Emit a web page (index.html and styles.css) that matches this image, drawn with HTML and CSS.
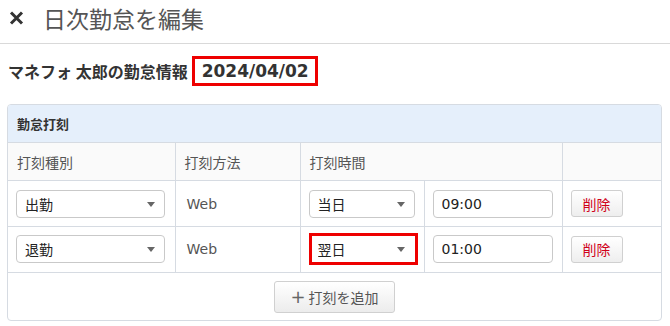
FILE: index.html
```html
<!DOCTYPE html>
<html lang="ja">
<head>
<meta charset="utf-8">
<link rel="stylesheet" href="styles.css">
</head>
<body>
<header class="modal-head">
  <svg class="close" width="15" height="14" viewBox="0 0 15 14"><path d="M2 1.5 L13 12.5 M13 1.5 L2 12.5" stroke="#333" stroke-width="3" stroke-linecap="butt"/></svg>
  <h1 class="title">日次勤怠を編集</h1>
</header>
<div class="info">
  <span class="name">マネフォ 太郎の勤怠情報</span>
  <span class="date">2024/04/02</span>
</div>
<section class="panel">
  <div class="panel-head">勤怠打刻</div>
  <table class="grid">
    <colgroup>
      <col class="c1"><col class="c2"><col class="c3"><col class="c4"><col class="c5">
    </colgroup>
    <thead>
      <tr><th>打刻種別</th><th>打刻方法</th><th colspan="2">打刻時間</th><th></th></tr>
    </thead>
    <tbody>
      <tr class="r1">
        <td><span class="sel w1"><select><option>出勤</option></select></span></td>
        <td class="web">Web</td>
        <td><span class="sel w2"><select><option>当日</option></select></span></td>
        <td><input class="time" type="text" value="09:00"></td>
        <td><button class="del">削除</button></td>
      </tr>
      <tr class="r2">
        <td><span class="sel w1"><select><option>退勤</option></select></span></td>
        <td class="web">Web</td>
        <td><span class="sel w2 mark"><select><option>翌日</option></select></span></td>
        <td><input class="time" type="text" value="01:00"></td>
        <td><button class="del">削除</button></td>
      </tr>
    </tbody>
  </table>
  <div class="panel-foot">
    <button class="add"><span class="plus">+</span>打刻を追加</button>
  </div>
</section>
</body>
</html>
```

FILE: styles.css
```css
* { box-sizing: border-box; }
html, body { margin: 0; padding: 0; background: #fff; }
body {
  font-family: "DejaVu Sans", "Noto Sans CJK JP", sans-serif;
  color: #333;
  width: 670px;
  height: 326px;
  overflow: hidden;
}
.modal-head {
  height: 44px;
  border-bottom: 1px solid #d9d9d9;
  display: flex;
  align-items: center;
  padding: 0 0 8px 9px;
}
.close { display: block; margin-right: 19px; }
.title {
  margin: 0;
  font-family: "Noto Sans CJK JP", sans-serif;
  font-weight: 400;
  font-size: 23px;
  line-height: 28px;
  color: #555;
}
.info {
  display: flex;
  align-items: center;
  padding: 12px 8px 18px 8px;
  height: 60px;
}
.name {
  font-family: "Noto Sans CJK JP", sans-serif;
  font-weight: 700;
  font-size: 16px;
  color: #333;
  margin-right: 4px;
}
.date {
  display: inline-flex;
  align-items: center;
  height: 30px;
  border: 3px solid #ee0000;
  padding: 0 6px 0 7px;
  font-weight: 700;
  font-size: 17px;
  color: #333;
}
.panel {
  margin-left: 7px;
  width: 655px;
  border: 1px solid #d6dbe2;
  border-radius: 4px;
  overflow: hidden;
}
.panel-head {
  height: 37px;
  background: #e5effb;
  display: flex;
  align-items: center;
  padding-left: 9px;
  font-family: "Noto Sans CJK JP", sans-serif;
  font-weight: 700;
  font-size: 13px;
  color: #333;
}
.grid {
  width: 100%;
  border-collapse: collapse;
  table-layout: fixed;
}
.c1 { width: 167px; }
.c2 { width: 125px; }
.c3 { width: 124px; }
.c4 { width: 138px; }
.c5 { width: 99px; }
.grid th, .grid td {
  border-top: 1px solid #d6dbe2;
  border-left: 1px solid #d6dbe2;
  padding: 0 0 0 8px;
  text-align: left;
  vertical-align: middle;
}
.grid th:first-child, .grid td:first-child { border-left: none; }
.grid th {
  height: 38px;
  background: #fafafa;
  font-family: "Noto Sans CJK JP", sans-serif;
  font-weight: 400;
  font-size: 14px;
  color: #555;
  padding-left: 9px;
}
.grid tr.r1 td { height: 46px; }
.grid tr.r2 td { height: 45px; }
.grid td.web { font-size: 14px; color: #555; padding-left: 11px; }
.sel {
  position: relative;
  display: block;
  height: 28px;
}
.sel.w1 { width: 149px; }
.sel.w2 { width: 106px; }
.sel select {
  appearance: none;
  -webkit-appearance: none;
  width: 100%;
  height: 28px;
  border: 1px solid #c9c9c9;
  border-radius: 4px;
  background: #fff;
  font-family: "Noto Sans CJK JP", sans-serif;
  font-size: 14px;
  color: #222;
  padding: 0 0 0 8px;
}
.sel::after {
  content: "";
  position: absolute;
  right: 10px;
  top: 12px;
  border-left: 4px solid transparent;
  border-right: 4px solid transparent;
  border-top: 5px solid #666;
}
.sel.mark::before {
  content: "";
  position: absolute;
  left: 0;
  top: -2px;
  right: -3px;
  bottom: -2px;
  border: 3px solid #ee0000;
  pointer-events: none;
  z-index: 1;
}
.sel.mark select { border-color: transparent; }
.time {
  display: block;
  width: 120px;
  height: 28px;
  margin-left: 0;
  border: 1px solid #c9c9c9;
  border-radius: 4px;
  font-family: "DejaVu Sans", sans-serif;
  font-size: 14px;
  color: #222;
  padding: 0 0 0 8px;
}
.del {
  display: block;
  margin-left: 0;
  width: 52px;
  height: 27px;
  border: 1px solid #d0d0d0;
  border-radius: 3px;
  background: linear-gradient(#ffffff, #eeeeee);
  font-family: "Noto Sans CJK JP", sans-serif;
  font-size: 14px;
  color: #d0021b;
  padding: 0;
}
.panel-foot {
  border-top: 1px solid #d6dbe2;
  display: flex;
  justify-content: center;
  padding: 8px 0 7px;
}
.add {
  width: 121px;
  height: 32px;
  border: 1px solid #d0d0d0;
  border-radius: 3px;
  background: linear-gradient(#ffffff, #ececec);
  font-family: "Noto Sans CJK JP", sans-serif;
  font-size: 14px;
  color: #555;
  display: flex;
  align-items: center;
  justify-content: center;
  padding: 0;
}
.plus { font-family: "DejaVu Sans", sans-serif; font-size: 18px; margin-right: 3px; line-height: 1; color: #666; }
```
